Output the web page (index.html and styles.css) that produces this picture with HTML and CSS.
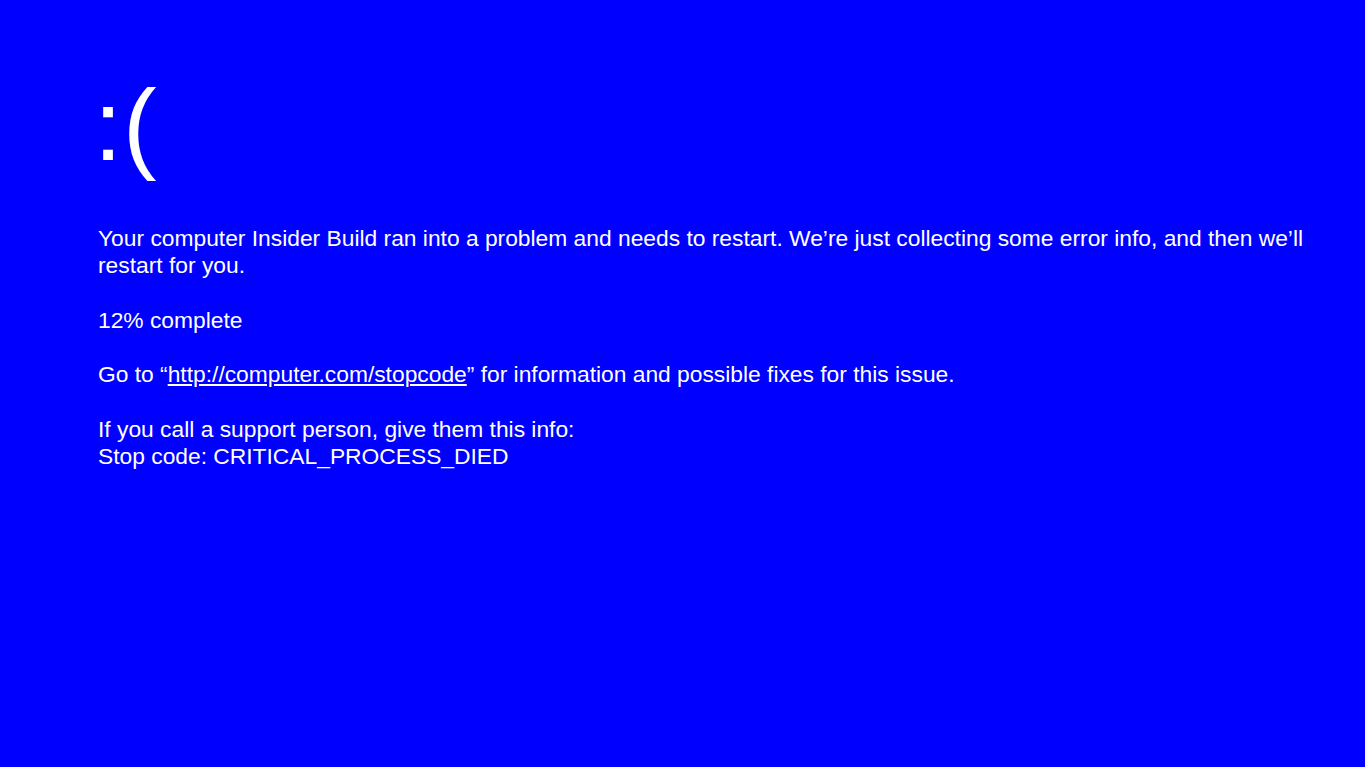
FILE: index.html
```html
<!DOCTYPE html>
<html lang="en">
<head>
<meta charset="utf-8">
<title>Blue screen</title>
<link rel="stylesheet" href="styles.css">
</head>
<body>
<main class="screen">
  <div class="face">:(</div>
  <p class="msg">Your computer Insider Build ran into a problem and needs to restart. We’re just collecting some error info, and then we’ll restart for you.</p>
  <p class="msg">12% complete</p>
  <p class="msg">Go to “<a class="link" href="#">http://computer.com/stopcode</a>” for information and possible fixes for this issue.</p>
  <p class="msg">If you call a support person, give them this info:<br>Stop code: CRITICAL_PROCESS_DIED</p>
</main>
</body>
</html>
```
FILE: styles.css
```css
html, body {
  margin: 0;
  padding: 0;
  background: #0000ff;
  height: 100%;
}
body {
  color: #ffffff;
  font-family: "Liberation Sans", Arial, sans-serif;
}
.screen {
  padding: 65px 40px 0 98px;
}
.face {
  font-size: 101px;
  line-height: 120px;
  margin: 0 0 40px -4px;
  letter-spacing: 1px;
}
.msg {
  font-size: 22.8px;
  line-height: 27.3px;
  margin: 0 0 27.3px 0;
}
.link {
  color: #ffffff;
  text-decoration: underline;
}
```
